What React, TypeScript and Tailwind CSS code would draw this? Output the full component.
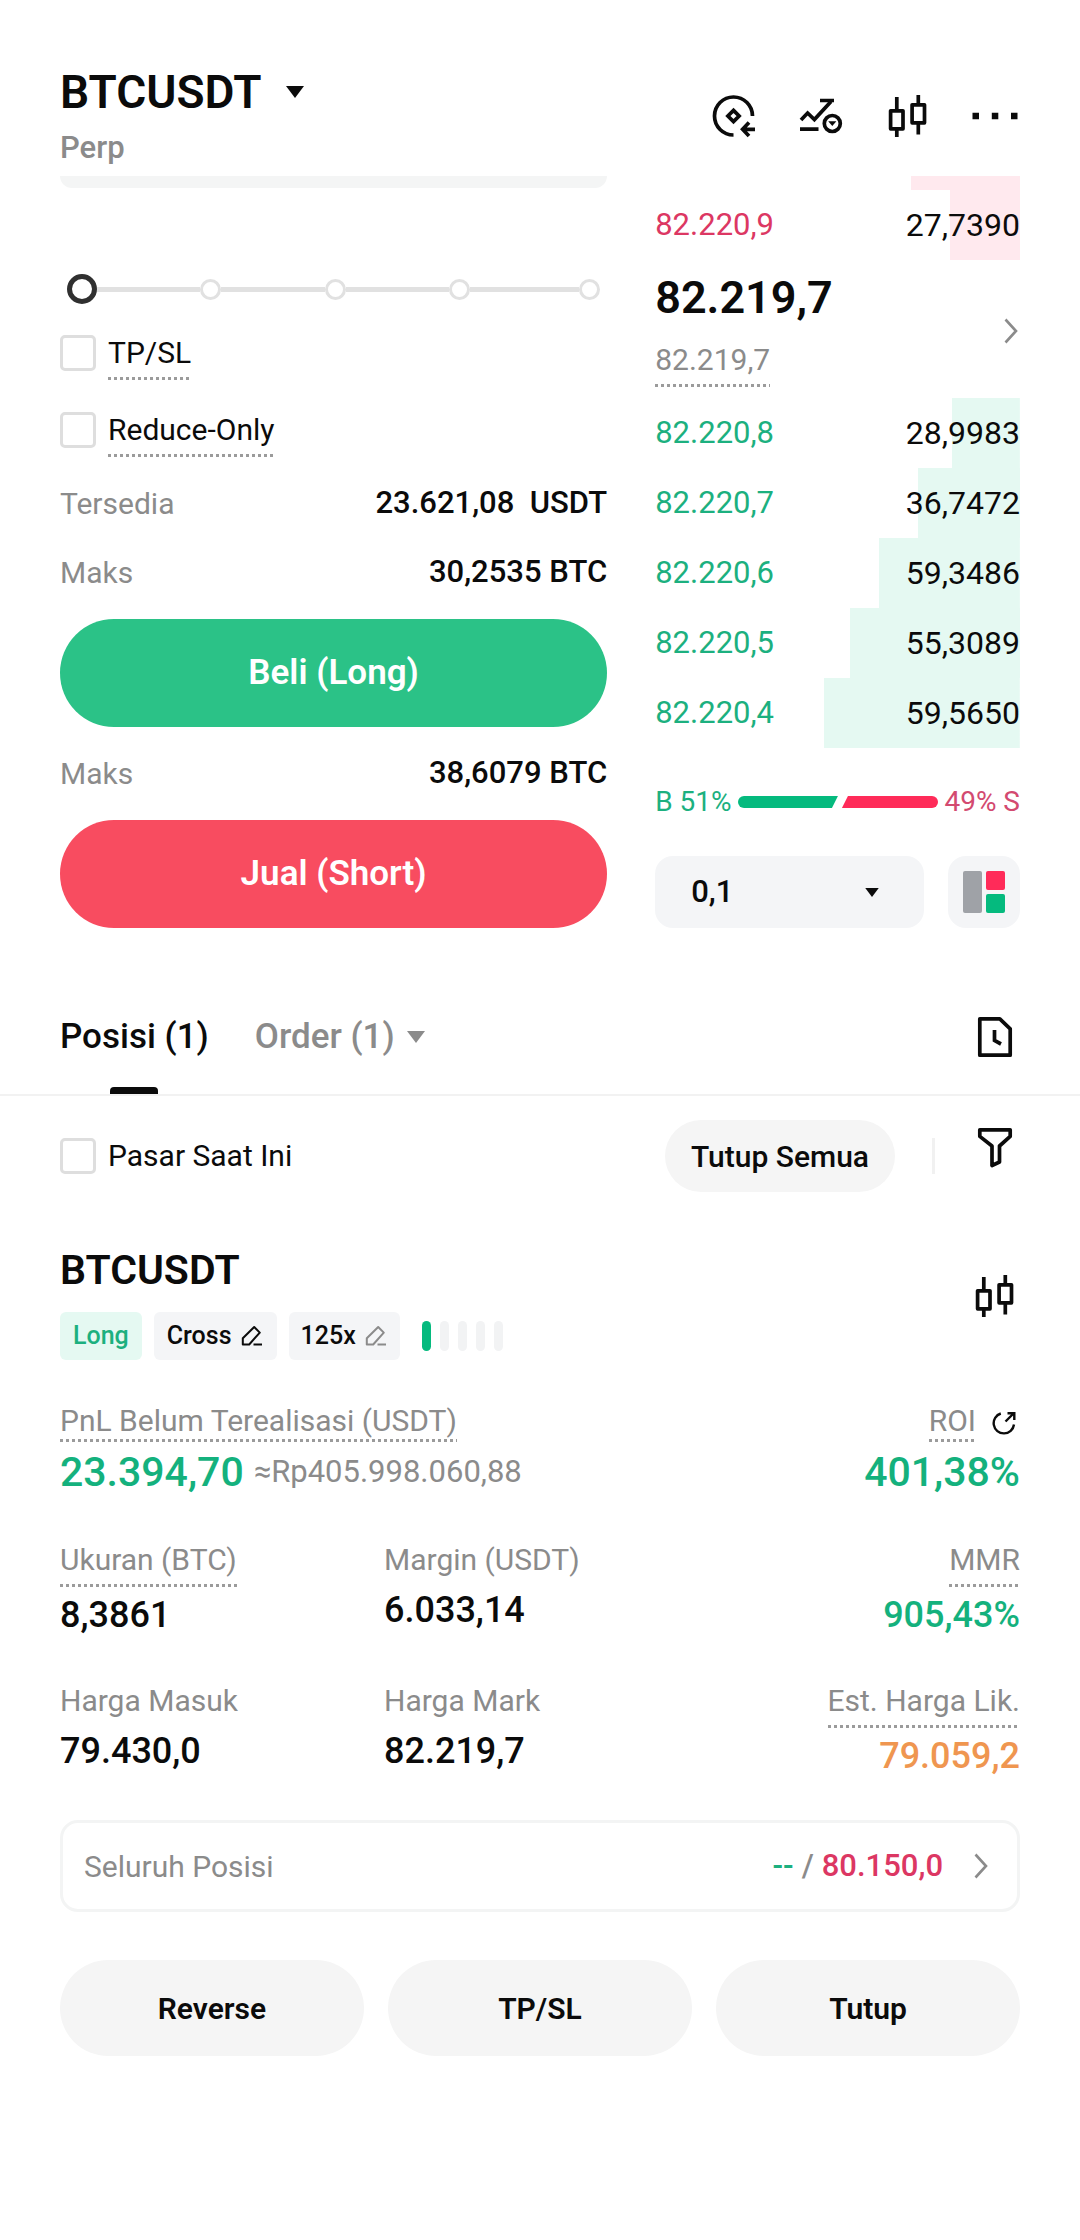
import { useState } from 'react';
import type { ReactNode } from 'react';

const BIDS = [
  { price: '82.220,8', amount: '28,9983', depth: 18.6 },
  { price: '82.220,7', amount: '36,7472', depth: 28 },
  { price: '82.220,6', amount: '59,3486', depth: 38.6 },
  { price: '82.220,5', amount: '55,3089', depth: 46.6 },
  { price: '82.220,4', amount: '59,5650', depth: 53.7 },
];

const STATS = [
  { label: 'Ukuran (BTC)', value: '8,3861', hint: true, color: 'text-[#0b0b0b]' },
  { label: 'Margin (USDT)', value: '6.033,14', hint: false, color: 'text-[#0b0b0b]' },
  { label: 'MMR', value: '905,43%', hint: true, color: 'text-[#14b17d]' },
  { label: 'Harga Masuk', value: '79.430,0', hint: false, color: 'text-[#0b0b0b]' },
  { label: 'Harga Mark', value: '82.219,7', hint: false, color: 'text-[#0b0b0b]' },
  { label: 'Est. Harga Lik.', value: '79.059,2', hint: true, color: 'text-[#ef9650]' },
];

function Hint({ children, tight = false }: { children: ReactNode; tight?: boolean }) {
  return (
    <span className="inline-flex flex-col leading-9">
      {children}
      <span
        className={`h-[3px] bg-[repeating-linear-gradient(90deg,#9b9b9b_0_3px,transparent_3px_6px)] ${tight ? '' : 'mt-1.5'}`}
      />
    </span>
  );
}

function Check({ label, hint = false }: { label: string; hint?: boolean }) {
  return (
    <label className="flex items-start gap-3">
      <input
        type="checkbox"
        className="w-9 h-9 shrink-0 appearance-none rounded-[5px] border-3 border-[#dedede] checked:bg-[#303030]"
      />
      {hint ? <Hint>{label}</Hint> : <span className="leading-9">{label}</span>}
    </label>
  );
}

function Caret({ className }: { className: string }) {
  return (
    <svg className={className} viewBox="0 0 18 12" fill="currentColor" aria-hidden="true">
      <path d="M0 0h18L9 12z" />
    </svg>
  );
}

function Chevron({ className }: { className: string }) {
  return (
    <svg className={className} viewBox="0 0 14 26" fill="none" stroke="currentColor" strokeWidth="2.6" aria-hidden="true">
      <path d="M1.5 1.5L12 13 1.5 24.5" />
    </svg>
  );
}

function CandlesIcon() {
  return (
    <svg className="w-12 h-12" viewBox="1 0 48 48" fill="none" stroke="currentColor" strokeWidth="3.7" strokeLinejoin="round" aria-hidden="true">
      <path d="M12.8 5v13M12.8 37v8M34.3 3v9M34.3 31v11.5" />
      <path d="M6.6 18.8H19v18H6.6zM28.1 12.8h12.4v18H28.1z" />
    </svg>
  );
}

function PencilIcon({ className }: { className: string }) {
  return (
    <svg className={className} viewBox="0 0 24 24" fill="none" stroke="currentColor" strokeWidth="2" strokeLinejoin="round" aria-hidden="true">
      <path d="M2.8 20.5v-6.2L14.2 3l5.6 5.6L9.2 20.5z" />
      <path d="M13.5 20.5H22" />
    </svg>
  );
}

function Header() {
  return (
    <header className="flex items-center justify-between px-[60px] pt-16 pb-2">
      <div>
        <button className="flex items-center gap-6 text-[46px] leading-14 font-semibold">
          BTCUSDT
          <Caret className="w-[18px] h-3" />
        </button>
        <p className="mt-2 text-[31px] leading-10 font-medium text-[#8b8b8b]">Perp</p>
      </div>
      <div className="flex gap-[39px]">
        <button aria-label="Konversi">
          <svg className="w-12 h-12" viewBox="1 0 48 48" fill="none" stroke="currentColor" strokeWidth="3.7">
            <path d="M42.5 24A19 19 0 1 0 23.5 43" />
            <path d="M23.5 18.4l5.6 5.6-5.6 5.6-5.6-5.6z" />
            <path d="M45 37.3H33M39 30.5l-6.4 6.8 6.4 6.8" />
          </svg>
        </button>
        <button aria-label="Strategi">
          <svg className="w-12 h-12" viewBox="1 0 48 48" fill="none" stroke="currentColor" strokeWidth="3.7">
            <path d="M4 28l6.6-7 6.8 6.5L34 9.5" />
            <path d="M23 8.5h14M3 37.2h18.5" />
            <circle cx="35.3" cy="31.5" r="8" />
            <path d="M31.2 29.2h8.2l-4.1 4.8z" fill="currentColor" stroke="none" />
          </svg>
        </button>
        <button aria-label="Grafik">
          <CandlesIcon />
        </button>
        <button aria-label="Lainnya">
          <svg className="w-12 h-12" viewBox="1 0 48 48" fill="currentColor">
            <path d="M1.5 20.8H8v6.5H1.5zM20.8 20.8h6.5v6.5h-6.5zM40 20.8h6.5v6.5H40z" />
          </svg>
        </button>
      </div>
    </header>
  );
}

function AmountSlider() {
  const [amount, setAmount] = useState(0);
  const dot = 'w-[21px] h-[21px] rounded-full border-3 border-[#e1e1e1]';
  const line = 'h-[5px] bg-[#e1e1e1]';
  return (
    <div className="relative mt-[86px] mb-[31px] flex items-center px-[7px]">
      <span className="w-[30px] h-[30px] rounded-full border-5 border-[#303030]" />
      <span className={`${line} flex-[17]`} />
      <span className={dot} />
      <span className={`${line} flex-[17]`} />
      <span className={dot} />
      <span className={`${line} flex-[17]`} />
      <span className={dot} />
      <span className={`${line} flex-[18]`} />
      <span className={dot} />
      <input
        type="range"
        min={0}
        max={100}
        step={25}
        value={amount}
        onChange={e => setAmount(Number(e.target.value))}
        aria-label="Jumlah"
        className="absolute inset-0 w-full h-full opacity-0"
      />
    </div>
  );
}

function InfoRow({ label, value }: { label: string; value: string }) {
  return (
    <div className="flex h-[69px] items-center justify-between">
      <span className="text-[#8b8b8b]">{label}</span>
      <span className="text-[31px] font-medium whitespace-pre">{value}</span>
    </div>
  );
}

function OrderForm() {
  return (
    <section>
      <div className="h-3 rounded-b-2xl bg-[#f4f5f5]" />
      <AmountSlider />
      <div className="mb-3 flex flex-col gap-8">
        <Check label="TP/SL" hint />
        <Check label="Reduce-Only" hint />
      </div>
      <InfoRow label="Tersedia" value="23.621,08  USDT" />
      <InfoRow label="Maks" value="30,2535 BTC" />
      <button className="my-3 block h-[108px] w-full rounded-full bg-[#2bc287] text-[35px] font-semibold text-white">
        Beli (Long)
      </button>
      <InfoRow label="Maks" value="38,6079 BTC" />
      <button className="mt-3 block h-[108px] w-full rounded-full bg-[#f84c60] text-[35px] font-semibold text-white">
        Jual (Short)
      </button>
    </section>
  );
}

function OrderBook() {
  return (
    <section>
      <div className="ml-auto h-3.5 w-[30%] bg-[#ffe9ee]" />
      <table className="w-full">
        <tbody>
          <tr
            className="h-[70px] bg-[linear-gradient(#ffe9ee,#ffe9ee)] bg-right bg-no-repeat"
            style={{ backgroundSize: '19.2% 100%' }}
          >
            <td className="p-0 text-[31px] text-[#dc3763]">82.220,9</td>
            <td className="p-0 text-right text-[32px]">27,7390</td>
          </tr>
        </tbody>
      </table>

      <button className="flex w-full items-center justify-between pt-3.5 pb-[11px] text-left">
        <span>
          <span className="block text-[45px] leading-12 font-semibold">82.219,7</span>
          <span className="mt-5 flex text-[#8b8b8b]">
            <Hint>82.219,7</Hint>
          </span>
        </span>
        <Chevron className="mr-0.5 w-3.5 h-[26px] text-[#8b8b8b]" />
      </button>

      <table className="w-full">
        <tbody>
          {BIDS.map(bid => (
            <tr
              key={bid.price}
              className="h-[70px] bg-[linear-gradient(#e5f9f2,#e5f9f2)] bg-right bg-no-repeat"
              style={{ backgroundSize: `${bid.depth}% 100%` }}
            >
              <td className="p-0 text-[31px] text-[#1cb07f]">{bid.price}</td>
              <td className="p-0 text-right text-[32px]">{bid.amount}</td>
            </tr>
          ))}
        </tbody>
      </table>

      {/* Rasio beli / jual */}
      <div className="my-9 flex h-9 items-center gap-1.5 text-[28px]">
        <span className="text-[#1cb07f]">B 51%</span>
        <span className="flex h-3 flex-1 gap-1">
          <span className="flex-[51] rounded-l-full bg-[#05ba7e] [clip-path:polygon(0_0,100%_0,calc(100%-6px)_100%,0_100%)]" />
          <span className="flex-[49] rounded-r-full bg-[#ff2b59] [clip-path:polygon(6px_0,100%_0,100%_100%,0_100%)]" />
        </span>
        <span className="text-[#d34a70]">49% S</span>
      </div>

      <div className="flex gap-6">
        <div className="relative flex-1">
          <select
            aria-label="Presisi harga"
            className="h-[72px] w-full appearance-none rounded-[18px] bg-[#f4f5f7] px-9 text-[31px] font-medium"
          >
            <option>0,1</option>
            <option>1</option>
            <option>10</option>
          </select>
          <Caret className="pointer-events-none absolute top-8 right-[45px] h-[9px] w-3.5" />
        </div>
        <button
          aria-label="Tampilan order book"
          className="flex h-[72px] w-[72px] items-center justify-center rounded-[18px] bg-[#f4f5f7]"
        >
          <svg className="w-[42px] h-[42px]" viewBox="0 0 42 42">
            <rect width="19" height="42" rx="2" fill="#9fa2a7" />
            <rect x="23" width="19" height="19" rx="2" fill="#ff2b59" />
            <rect x="23" y="23" width="19" height="19" rx="2" fill="#05ba7e" />
          </svg>
        </button>
      </div>
    </section>
  );
}

function Tabs() {
  return (
    <nav className="mt-[52px] flex items-center justify-between border-b-2 border-[#f2f2f2] px-[60px] text-[35px] font-medium">
      <div className="flex gap-[46px]">
        <button className="relative h-[114px]">
          Posisi (1)
          <span className="absolute bottom-0 left-1/2 h-[7px] w-12 -translate-x-1/2 rounded-t-[4px] bg-[#0b0b0b]" />
        </button>
        <button className="flex items-center gap-3 text-[#8b8b8b]">
          Order (1)
          <Caret className="w-[18px] h-3" />
        </button>
      </div>
      <button aria-label="Riwayat">
        <svg className="w-12 h-12" viewBox="1 0 48 48" fill="none" stroke="currentColor" strokeWidth="3.7" strokeLinejoin="round">
          <path d="M8.8 5.8h20l10.4 10v26.4H8.8z" />
          <path d="M23.5 17v10.5l6.5 3.5" strokeLinejoin="miter" />
        </svg>
      </button>
    </nav>
  );
}

function Position() {
  return (
    <section className="px-[60px] pt-6 pb-[183px]">
      <div className="flex items-center justify-between">
        <Check label="Pasar Saat Ini" />
        <div className="flex items-center gap-[37px]">
          <button className="h-[72px] rounded-full bg-[#f5f5f5] px-[26px] font-medium">Tutup Semua</button>
          <span className="h-9 w-[3px] bg-[#f1f1f1]" />
          <button aria-label="Filter" className="mt-1 self-start">
            <svg className="w-12 h-12" viewBox="1 0 48 48" fill="none" stroke="currentColor" strokeWidth="3.7" strokeLinejoin="round">
              <path d="M8.8 5.8h30.4v6.6L28.5 22v16L21 41.5V22L8.8 12.4z" />
            </svg>
          </button>
        </div>
      </div>

      <div className="mt-[54px] flex items-start justify-between">
        <div>
          <h2 className="text-[41px] leading-12 font-semibold">BTCUSDT</h2>
          <div className="mt-[18px] flex items-center gap-3 text-[25px] font-medium">
            <span className="h-12 rounded-md bg-[#e5f9f2] px-[13px] leading-12 text-[#1cb07f]">Long</span>
            <button className="flex h-12 items-center gap-2 rounded-md bg-[#f4f5f7] px-[13px]">
              Cross
              <PencilIcon className="w-6 h-6" />
            </button>
            <button className="flex h-12 items-center gap-2 rounded-md bg-[#f4f5f7] px-3">
              125x
              <PencilIcon className="w-6 h-6 text-[#8b8b8b]" />
            </button>
            <span className="ml-2.5 flex gap-[9px]">
              <span className="h-[30px] w-[9px] rounded-full bg-[#05ba7e]" />
              <span className="h-[30px] w-[9px] rounded-full bg-[#f2f3f4]" />
              <span className="h-[30px] w-[9px] rounded-full bg-[#f2f3f4]" />
              <span className="h-[30px] w-[9px] rounded-full bg-[#f2f3f4]" />
              <span className="h-[30px] w-[9px] rounded-full bg-[#f2f3f4]" />
            </span>
          </div>
        </div>
        <button aria-label="Grafik posisi" className="mt-[26px]">
          <CandlesIcon />
        </button>
      </div>

      <div className="mt-[43px] flex justify-between">
        <div className="flex flex-col items-start">
          <span className="flex text-[#8b8b8b]">
            <Hint tight>PnL Belum Terealisasi (USDT)</Hint>
          </span>
          <p className="flex items-center gap-2.5 leading-[60px]">
            <span className="text-[41px] font-medium text-[#14b17d]">23.394,70</span>
            <span className="text-[31px] text-[#8b8b8b]">≈Rp405.998.060,88</span>
          </p>
        </div>
        <div className="flex flex-col items-end">
          <span className="flex items-center gap-4">
            <span className="flex text-[#8b8b8b]">
              <Hint tight>ROI</Hint>
            </span>
            <button aria-label="Bagikan" className="mr-1">
              <svg className="w-6 h-6" viewBox="0 0 24 24" fill="none" stroke="currentColor" strokeWidth="2.4">
                <path d="M8.8 2.5A10.2 10.2 0 1 0 22 13.5" />
                <path d="M13.5 10.5l8-8M15.5 2.3h6.8v6.8" />
              </svg>
            </button>
          </span>
          <p className="text-[41px] leading-[60px] font-medium text-[#14b17d]">401,38%</p>
        </div>
      </div>

      <dl className="mt-10 grid grid-cols-3 gap-x-3 gap-y-10">
        {STATS.map(stat => (
          <div key={stat.label} className="flex flex-col items-start nth-[3n]:items-end">
            <dt className="flex leading-9 text-[#8b8b8b]">{stat.hint ? <Hint>{stat.label}</Hint> : stat.label}</dt>
            <dd className={`text-[36px] leading-14 font-medium ${stat.color} ${stat.hint ? '' : 'mt-1'}`}>{stat.value}</dd>
          </div>
        ))}
      </dl>

      <button className="mt-9 flex h-[92px] w-full items-center justify-between rounded-[18px] border-3 border-[#f3f4f4] pr-7 pl-[21px]">
        <span className="text-[#8b8b8b]">Seluruh Posisi</span>
        <span className="flex items-center gap-2 text-[31px] font-medium">
          <span className="text-[#1cb07f]">--</span>
          <span className="text-[#8b8b8b]">/</span>
          <span className="text-[#dc3763]">80.150,0</span>
          <Chevron className="ml-[22px] h-[26px] w-4 text-[#8b8b8b]" />
        </span>
      </button>

      <div className="mt-12 grid grid-cols-3 gap-6 font-semibold">
        <button className="h-24 rounded-full bg-[#f5f5f5]">Reverse</button>
        <button className="h-24 rounded-full bg-[#f5f5f5]">TP/SL</button>
        <button className="h-24 rounded-full bg-[#f5f5f5]">Tutup</button>
      </div>
    </section>
  );
}

export default function App() {
  return (
    <main className="bg-white font-[Roboto,sans-serif] text-[30px] text-[#0b0b0b]">
      <Header />
      <div className="grid grid-cols-[3fr_2fr] gap-12 px-[60px]">
        <OrderForm />
        <OrderBook />
      </div>
      <Tabs />
      <Position />
    </main>
  );
}
